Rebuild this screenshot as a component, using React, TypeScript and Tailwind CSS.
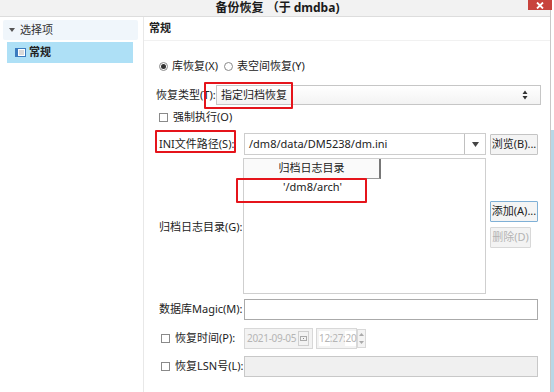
import React from "react";

const F = { fontFamily: '"Noto Sans", "Noto Sans CJK SC", sans-serif' };

function Radio({ checked }: { checked?: boolean }) {
  return (
    <span className="inline-flex w-[9px] h-[9px] rounded-full border border-[#8a8a8a] bg-white items-center justify-center">
      {checked && <span className="w-[5px] h-[5px] rounded-full bg-[#333]" />}
    </span>
  );
}

function Check() {
  return <span className="inline-block w-[9px] h-[9px] border border-[#8a8a8a] bg-white" />;
}

function Btn({ children, disabled, focus, w }: { children: React.ReactNode; disabled?: boolean; focus?: boolean; w: string }) {
  return (
    <div
      className={`${w} h-[21px] flex items-center justify-center whitespace-nowrap text-[11px] border rounded-[1px] ${
        disabled
          ? "border-[#d8d8d8] bg-[#f3f3f3] text-[#b4b4b4]"
          : focus
          ? "border-[#7fb0d6] bg-[#f4f4f4] text-[#222]"
          : "border-[#c4c4c4] bg-[#f4f4f4] text-[#222]"
      }`}
    >
      {children}
    </div>
  );
}

export default function App() {
  return (
    <div className="relative w-[554px] h-[392px] overflow-hidden bg-white text-[#222]" style={F}>
      <div className="flex w-full h-full">
        {/* dialog */}
        <div className="w-[551px] h-full flex flex-col border-r border-[#c8c8c8]">
          {/* title bar */}
          <div className="relative h-[17px] bg-[#f2f2f2] border-b border-[#dddddd] flex items-center justify-center">
            <span className="text-[12px] font-bold leading-none ml-[5px] text-[#1a1a1a]">备份恢复 （于 dmdba)</span>
            <div className="absolute right-[-2px] top-0 w-[24px] h-[10px] bg-[#c8433d] flex items-center justify-center">
              <svg width="8" height="7" viewBox="0 0 8 7">
                <path d="M1 0.5 L7 6.5 M7 0.5 L1 6.5" stroke="white" strokeWidth="1.8" />
              </svg>
            </div>
          </div>
          {/* body */}
          <div className="flex flex-1">
            {/* left tree */}
            <div className="w-[143px] pt-[3px] pl-[3px] pr-[5px]">
              <div className="h-[20px] bg-[#f0f6fb] rounded-[2px] flex items-center pl-[6px]">
                <svg width="6" height="4" viewBox="0 0 6 4" className="mr-[5px]">
                  <path d="M0 0 L6 0 L3 4 Z" fill="#555" />
                </svg>
                <span className="text-[11px] text-[#333]">选择项</span>
              </div>
              <div className="mt-[2px] ml-[4px] w-[126px] h-[21px] bg-[#aee0f6] flex items-center pl-[8px]">
                <span className="w-[11px] h-[9px] border border-[#3a7bbf] bg-white flex mr-[3px]">
                  <span className="w-[2px] h-full bg-[#3a7bbf]" />
                  <span className="flex-1 bg-[#d9d9d9] m-[1px]" />
                </span>
                <span className="text-[11px] font-semibold text-[#222]">常规</span>
              </div>
            </div>
            {/* right */}
            <div className="flex-1 border-l border-[#e8e8e8] flex flex-col">
              <div className="h-[24px] border-b border-[#f1f1f1] flex items-center pl-[5px]">
                <span className="text-[11px] font-bold">常规</span>
              </div>
              <div className="pl-[12px] flex flex-col">
                {/* radio row */}
                <div className="mt-[17px] h-[16px] flex items-center text-[11px]">
                  <span className="ml-[3px] mr-[4px] flex"><Radio checked /></span>
                  <span>库恢复(X)</span>
                  <span className="ml-[6px] mr-[4px] flex"><Radio /></span>
                  <span>表空间恢复(Y)</span>
                </div>
                {/* select row */}
                <div className="mt-[11px] h-[20px] flex items-center text-[11px]">
                  <span className="w-[60px] whitespace-nowrap">恢复类型(T):</span>
                  <div className="w-[325px] h-[20px] border border-[#c6c6c6] bg-gradient-to-b from-white to-[#f3f3f3] flex items-center pl-[4px] pr-[12px] justify-between">
                    <span>指定归档恢复</span>
                    <svg width="6" height="10" viewBox="0 0 6 10">
                      <path d="M0.5 4 L3 0.5 L5.5 4 Z M0.5 6 L3 9.5 L5.5 6 Z" fill="#333" />
                    </svg>
                  </div>
                </div>
                {/* force */}
                <div className="mt-[4px] h-[16px] flex items-center text-[11px]">
                  <span className="ml-[3px] mr-[5px] flex"><Check /></span>
                  <span>强制执行(O)</span>
                </div>
                {/* ini */}
                <div className="mt-[8px] h-[22px] flex items-center text-[11px]">
                  <span className="w-[88px] pl-[3px] whitespace-nowrap">INI文件路径(S):</span>
                  <div className="w-[242px] h-[22px] border border-[#cdcdcd] flex">
                    <div className="w-[220px] h-full border-r border-[#c0c0c0] bg-white flex items-center pl-[4px]">/dm8/data/DM5238/dm.ini</div>
                    <div className="flex-1 flex items-center justify-center bg-white">
                      <svg width="7" height="5" viewBox="0 0 7 5">
                        <path d="M0 0 L7 0 L3.5 5 Z" fill="#444" />
                      </svg>
                    </div>
                  </div>
                  <div className="ml-[4px]"><Btn w="w-[48px]">浏览(B)...</Btn></div>
                </div>
                {/* list */}
                <div className="mt-[3px] h-[136px] flex text-[11px]">
                  <div className="w-[87px] flex items-center pl-[3px]">
                    <span className="mt-[3px] whitespace-nowrap">归档日志目录(G):</span>
                  </div>
                  <div className="w-[243px] h-full border border-[#cfcfcf] bg-white flex flex-col">
                    <div className="w-[137px] h-[20px] border-r-2 border-b border-r-[#777] border-b-[#999] bg-[#fafafa] flex items-center justify-center">
                      归档日志目录
                    </div>
                    <div className="w-[137px] h-[17px] flex items-center justify-center">'/dm8/arch'</div>
                  </div>
                  <div className="ml-[4px] flex flex-col pt-[43px] gap-[5px]">
                    <Btn w="w-[48px]" focus>添加(A)...</Btn>
                    <Btn w="w-[41px]" disabled>删除(D)</Btn>
                  </div>
                </div>
                {/* magic */}
                <div className="mt-[5px] h-[21px] flex items-center text-[11px]">
                  <span className="w-[88px] pl-[3px] whitespace-nowrap">数据库Magic(M):</span>
                  <div className="w-[294px] h-[21px] border border-[#aaaaaa] bg-white" />
                </div>
                {/* time */}
                <div className="mt-[8px] h-[21px] flex items-center text-[11px]">
                  <span className="ml-[5px] mr-[5px] flex"><Check /></span>
                  <span className="w-[69px] whitespace-nowrap">恢复时间(P):</span>
                  <div className="w-[69px] h-[21px] border border-[#d8d8d8] bg-[#f3f3f3] flex items-center pl-[2px] text-[#b5b5b5] text-[10px] tracking-[-0.3px] whitespace-nowrap">
                    <span>2021-09-05</span>
                    <span className="ml-[2px] w-[11px] h-[15px] shrink-0 border border-[#d0d0d0] flex items-center justify-center">
                      <span className="w-[7px] h-[5px] border border-[#aaa] flex items-center justify-center">
                        <span className="w-[1px] h-[1px] bg-[#888]" />
                      </span>
                    </span>
                  </div>
                  <div className="ml-[3px] w-[41px] h-[21px] border border-[#d8d8d8] bg-[#f3f3f3] flex items-center pl-[2px] text-[#b5b5b5] text-[10px] tracking-[-0.3px] whitespace-nowrap">
                    <span className="bg-white">12</span>:<span>27</span>:<span className="bg-white">20</span>
                  </div>
                  <div className="w-[9px] h-[19px] border border-[#d8d8d8] bg-[#f3f3f3] flex flex-col items-center justify-around">
                    <svg width="5" height="3" viewBox="0 0 5 3"><path d="M0 3 L2.5 0 L5 3 Z" fill="#aaa" /></svg>
                    <svg width="5" height="3" viewBox="0 0 5 3"><path d="M0 0 L2.5 3 L5 0 Z" fill="#aaa" /></svg>
                  </div>
                </div>
                {/* lsn */}
                <div className="mt-[7px] h-[21px] flex items-center text-[11px]">
                  <span className="ml-[5px] mr-[5px] flex"><Check /></span>
                  <span className="w-[69px] whitespace-nowrap">恢复LSN号(L):</span>
                  <div className="w-[294px] h-[21px] border border-[#c8c8c8] bg-[#f0f0f0]" />
                </div>
              </div>
            </div>
          </div>
        </div>
        {/* desktop strip */}
        <div className="flex-1 flex flex-col">
          <div className="h-[130px] bg-white" />
          <div className="flex-1 bg-[#b8d7e6]" />
        </div>
      </div>
      {/* red annotation boxes */}
      <div className="absolute left-[204px] top-[82px] w-[89px] h-[27px] border-2 border-[#e5141b] rounded-[1px]" />
      <div className="absolute left-[155px] top-[130px] w-[81px] h-[23px] border-2 border-[#e5141b] rounded-[1px]" />
      <div className="absolute left-[236px] top-[178px] w-[131px] h-[25px] border-2 border-[#e5141b] rounded-[1px]" />
    </div>
  );
}
